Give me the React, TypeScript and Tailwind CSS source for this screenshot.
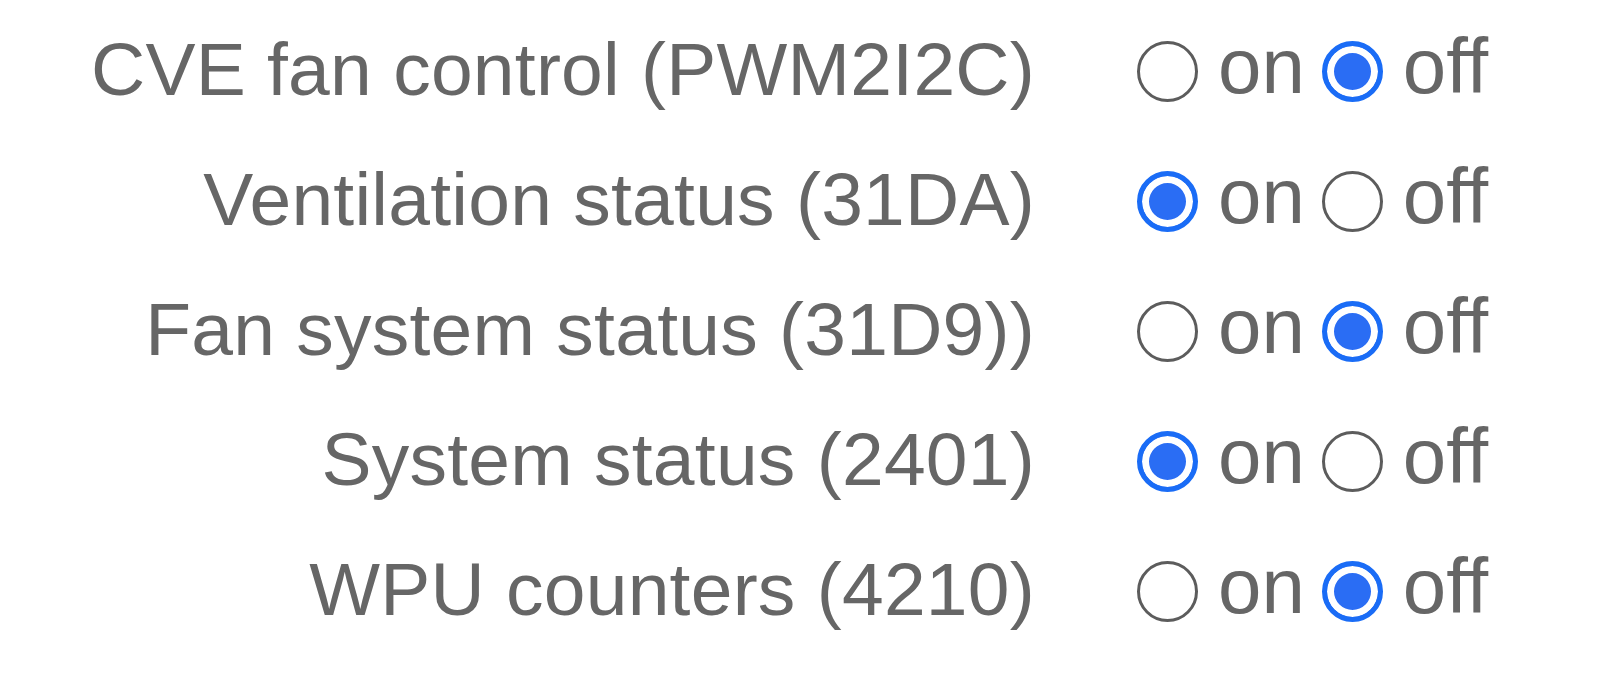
import React, { useState } from "react";

type Row = { id: string; label: string; value: "on" | "off" };

const initialRows: Row[] = [
	{ id: "pwm", label: "CVE fan control (PWM2I2C)", value: "off" },
	{ id: "31da", label: "Ventilation status (31DA)", value: "on" },
	{ id: "31d9", label: "Fan system status (31D9))", value: "off" },
	{ id: "2401", label: "System status (2401)", value: "on" },
	{ id: "4210", label: "WPU counters (4210)", value: "off" },
];

const radioClass =
	"appearance-none m-0 w-[61px] h-[61px] shrink-0 rounded-full bg-white border-[3px] border-[#5c5c5c] checked:border-[5px] checked:border-[#1a6cf6] checked:bg-[#2a6df4] checked:shadow-[inset_0_0_0_7px_white]";

export default function App() {
	const [rows, setRows] = useState(initialRows);

	const setValue = (id: string, value: "on" | "off") => {
		setRows(rows.map(r => (r.id === id ? { ...r, value } : r)));
	};

	return (
		<div className="w-[1615px] h-[682px] bg-white pt-[6px] text-[#666666] font-['Liberation_Sans',Arial,sans-serif] text-[78px]">
			{rows.map(row => (
				<div key={row.id} className="flex items-center h-[130px]">
					<div className="w-[1035px] pb-[4px] text-right whitespace-nowrap leading-none text-[75px] tracking-[0.25px]">
						{row.label}
					</div>
					<div className="flex items-center ml-[102px] leading-none">
						<input
							type="radio"
							name={row.id}
							className={radioClass}
							checked={row.value === "on"}
							onChange={() => setValue(row.id, "on")}
						/>
						<span className="ml-[20px] mr-[17px] pb-[10px]">on</span>
						<input
							type="radio"
							name={row.id}
							className={radioClass}
							checked={row.value === "off"}
							onChange={() => setValue(row.id, "off")}
						/>
						<span className="ml-[20px] pb-[10px]">off</span>
					</div>
				</div>
			))}
		</div>
	);
}
